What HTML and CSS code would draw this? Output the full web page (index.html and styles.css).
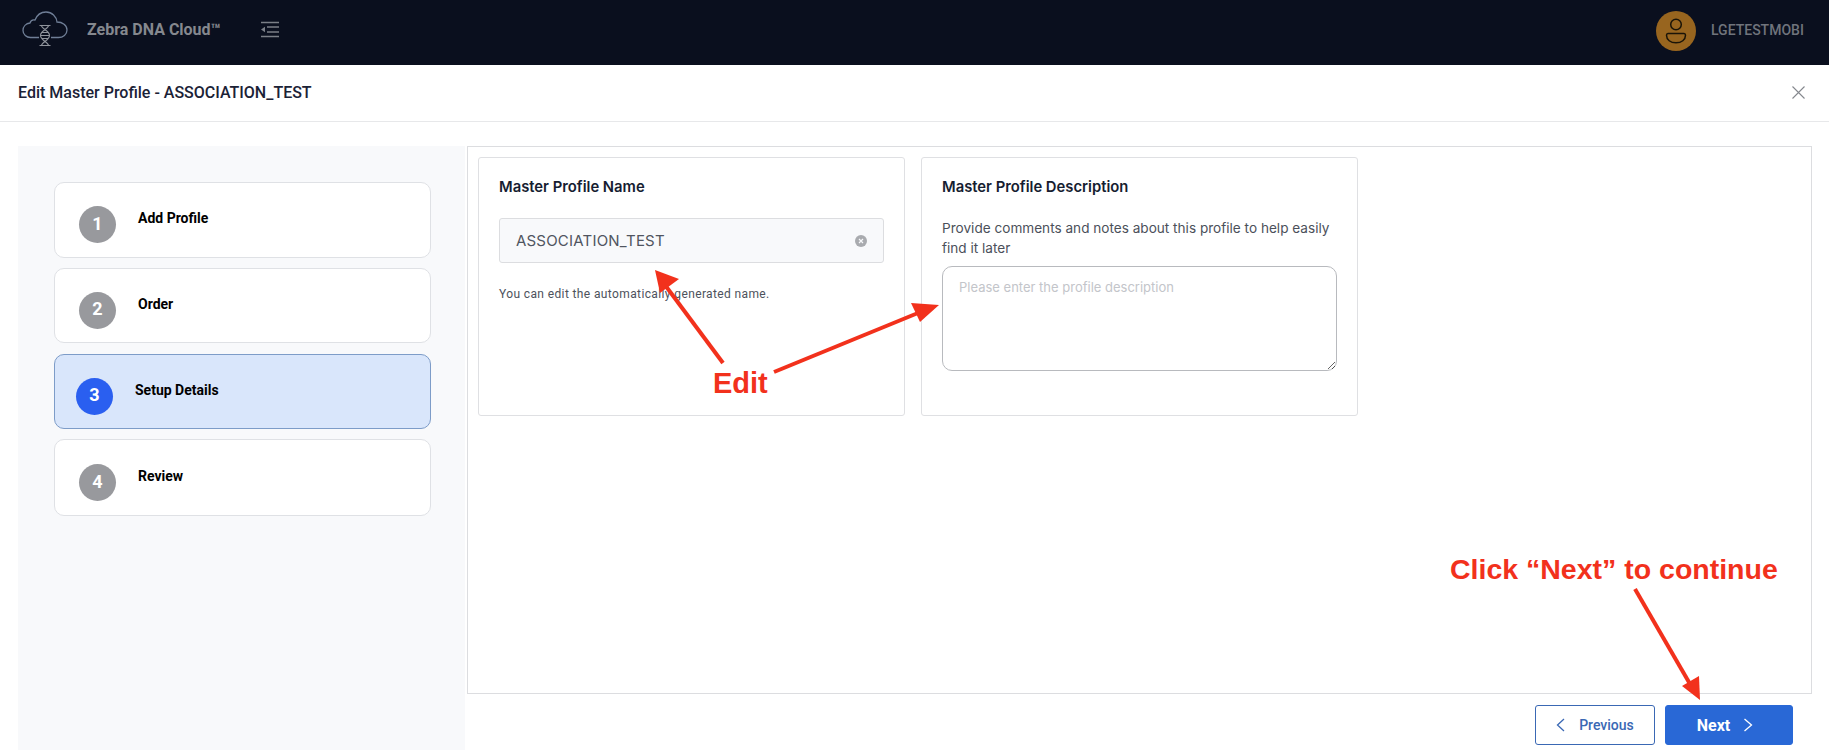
FILE: index.html
```html
<!DOCTYPE html>
<html lang="en">
<head>
<meta charset="utf-8">
<title>Edit Master Profile</title>
<link rel="stylesheet" href="styles.css">
</head>
<body>
<div class="page">
  <header class="topbar">
    <div class="brand">
      <svg class="logo" width="46" height="36" viewBox="0 0 46 36" fill="none">
        <path d="M17 26.500H8.500C4.500 26.500 1 23.500 1 19.500C1 15.500 4 12.500 8 12C8.500 10 10.500 8.500 13 9C15 4 19.500 1 24 1C30 1 34.500 5.500 35 11C40.500 11 45 14.500 45 19C45 23.500 41 26.500 36.500 26.500H29" stroke="#6f7e96" stroke-width="1.300"/>
        <path d="M17.500 14.500H28.500M17.500 34.500H28.500M19.500 14.500C19.500 18 27.500 19.500 27.500 24.500C27.500 29.500 19.500 31 19.500 34.500M26.500 14.500C26.500 18 18.500 19.500 18.500 24.500C18.500 29.500 26.500 31 26.500 34.500M20 21.500H26M19 24.500H27M20 27.500H26" stroke="#8f939b" stroke-width="1.100"/>
      </svg>
      <span class="brand-name">Zebra DNA Cloud™</span>
      <svg class="menu-icon" width="19" height="17" viewBox="0 0 19 17" fill="none" stroke="#7b7f87" stroke-width="1.400">
        <path d="M0 1.500H18M6 6H18M6 11H18M0 15.500H18"/>
        <path d="M0 8.500L4 5.800V11.200Z" fill="#7b7f87" stroke="none"/>
      </svg>
    </div>
    <div class="user">
      <span class="avatar">
        <svg width="22" height="26" viewBox="0 0 22 26" fill="none" stroke="#1a1408" stroke-width="1.500">
          <circle cx="11" cy="6.500" r="5.300"/>
          <path d="M3 15.500H19C20 15.500 20.500 16.300 20.500 17.300C20.500 21.800 16.500 24.800 11 24.800C5.500 24.800 1.500 21.800 1.500 17.300C1.500 16.300 2 15.500 3 15.500Z"/>
        </svg>
      </span>
      <span class="user-name">LGETESTMOBI</span>
    </div>
  </header>

  <div class="titlebar">
    <h1 class="page-title">Edit Master Profile - ASSOCIATION_TEST</h1>
    <svg class="close-icon" width="13" height="13" viewBox="0 0 13 13" stroke="#85888e" stroke-width="1.100" fill="none">
      <path d="M0.500 0.500L12.500 12.500M12.500 0.500L0.500 12.500"/>
    </svg>
  </div>

  <div class="workspace">
    <aside class="sidebar">
      <div class="step">
        <span class="step-num">1</span><span class="step-label">Add Profile</span>
      </div>
      <div class="step">
        <span class="step-num">2</span><span class="step-label">Order</span>
      </div>
      <div class="step step-active">
        <span class="step-num">3</span><span class="step-label">Setup Details</span>
      </div>
      <div class="step">
        <span class="step-num">4</span><span class="step-label">Review</span>
      </div>
    </aside>

    <main class="content">
      <section class="panel">
        <div class="card card-name">
          <h2 class="card-title">Master Profile Name</h2>
          <div class="field">
            <span class="field-value">ASSOCIATION_TEST</span>
            <svg width="12" height="12" viewBox="0 0 12 12">
              <circle cx="6" cy="6" r="6" fill="#a9abaf"/>
              <path d="M4 4L8 8M8 4L4 8" stroke="#f8f9fb" stroke-width="1.200"/>
            </svg>
          </div>
          <p class="hint">You can edit the automatically generated name.</p>
        </div>
        <div class="card card-desc">
          <h2 class="card-title">Master Profile Description</h2>
          <p class="desc">Provide comments and notes about this profile to help easily find it later</p>
          <textarea class="desc-input" placeholder="Please enter the profile description"></textarea>
        </div>
      </section>
      <footer class="actions">
        <button class="btn btn-outline" type="button">
          <svg width="9" height="14" viewBox="0 0 9 14" fill="none" stroke="#3a68b4" stroke-width="1.300"><path d="M8 1L1.500 7L8 13"/></svg>
          Previous
        </button>
        <button class="btn btn-primary" type="button">
          Next
          <svg width="10" height="14" viewBox="0 0 10 14" fill="none" stroke="#ffffff" stroke-width="1.300"><path d="M1.500 1L8.500 7L1.500 13"/></svg>
        </button>
      </footer>
    </main>
  </div>

  <svg class="arrows" width="1829" height="750" viewBox="0 0 1829 750">
    <g stroke="#f2311c" stroke-width="4" fill="#f2311c">
      <path d="M723 363L665 285" fill="none"/>
      <path d="M655 270L679 279L660 293Z" stroke="none"/>
      <path d="M774 372L918 313" fill="none"/>
      <path d="M939 305L920 322L911 303Z" stroke="none"/>
      <path d="M1635 589L1690 684" fill="none"/>
      <path d="M1700 700L1682 686L1699 676Z" stroke="none"/>
    </g>
  </svg>
  <span class="note note-edit">Edit</span>
  <span class="note note-next">Click “Next” to continue</span>
</div>
</body>
</html>
```
FILE: styles.css
```css
* { box-sizing: border-box; }
html, body { margin: 0; padding: 0; height: 100%; overflow: hidden; background: #fff; }
body { font-family: Roboto, "Liberation Sans", sans-serif; }

.page { position: relative; width: 1829px; height: 750px; display: flex; flex-direction: column; overflow: hidden; }

.topbar { height: 65px; flex: none; background: #0a0f1e; display: flex; align-items: center; justify-content: space-between; padding: 0 25px 5px 22px; }
.brand { display: flex; align-items: center; margin-bottom: 2px; }
.brand-name { margin-left: 19px; width: 174px; font-size: 16px; font-weight: 700; color: #85888e; }
.user { display: flex; align-items: center; }
.avatar { width: 40px; height: 40px; border-radius: 50%; background: #98651f; display: flex; align-items: center; justify-content: center; margin: 2px 15px 0 0; }
.user-name { font-size: 14px; font-weight: 500; color: #70747c; width: 93px; white-space: nowrap; }

.titlebar { height: 57px; flex: none; border-bottom: 1px solid #e7e8ea; display: flex; align-items: center; justify-content: space-between; padding: 0 24px 1px 18px; }
.page-title { margin: 0; font-size: 16px; font-weight: 500; color: #1b2236; }

.workspace { flex: 1; display: flex; padding: 24px 17px 0 18px; min-height: 0; }

.sidebar { width: 447px; flex: none; background: #f8f9fb; padding: 36px 34px 0 36px; display: flex; flex-direction: column; gap: 10.300px; }
.step { height: 75.500px; flex: none; border: 1px solid #dfe1e5; border-radius: 10px; background: #fff; display: flex; align-items: flex-start; padding: 23px 0 0 24px; }
.step:last-child { height: 76.500px; padding-top: 24px; }
.step-num { width: 37px; height: 37px; flex: none; border-radius: 50%; background: #98999d; color: #fff; font-size: 18px; font-weight: 700; display: flex; align-items: center; justify-content: center; padding-bottom: 3px; }
.step-label { margin: 4px 0 0 22px; font-size: 14px; line-height: 17px; font-weight: 700; color: #000; }
.step-active { background: #d9e6fb; border-color: #7d9cc8; padding-left: 21px; }
.step-active .step-num { background: #2a5ff0; }

.content { flex: 1; display: flex; flex-direction: column; min-width: 0; margin-left: 2px; }
.panel { height: 548px; flex: none; border: 1px solid #dcdde0; display: flex; align-items: flex-start; padding: 10px; gap: 16px; }

.card { height: 259px; border: 1px solid #dfe0e3; border-radius: 3px; background: #fff; padding: 20px; flex: none; }
.card-name { width: 427px; }
.card-desc { width: 437px; }
.card-title { margin: 0; font-family: Inter, sans-serif; font-size: 14.800px; line-height: 18px; font-weight: 600; color: #161d31; }

.field { margin-top: 22px; width: 385px; height: 45px; background: #f8f9fb; border: 1px solid #dcdde0; border-radius: 3px; display: flex; align-items: center; justify-content: space-between; padding: 0 16px 0 16px; }
.field-value { font-family: Inter, sans-serif; font-size: 15px; letter-spacing: 0.200px; color: #50555f; }
.hint { margin: 24px 0 0; font-size: 12px; line-height: 14px; letter-spacing: 0.380px; color: #4d525c; }

.desc { margin: 22px 0 0; font-family: Inter, sans-serif; font-size: 13.600px; line-height: 20px; color: #4b505a; }
.desc-input { display: block; margin-top: 8px; width: 395px; height: 105px; border: 1px solid #b8babe; border-radius: 10px; padding: 12px 16px; font-family: Inter, sans-serif; font-size: 13px; line-height: 17px; background: #fff; outline: none; }
.desc-input::placeholder { color: #c3c5ca; opacity: 1; }

.actions { flex: 1; display: flex; justify-content: flex-end; gap: 10px; padding: 11px 19px 0 0; align-items: flex-start; }
.btn { height: 40px; border-radius: 3px; font-family: Roboto, sans-serif; display: flex; align-items: center; justify-content: center; cursor: pointer; }
.btn-outline { width: 120px; background: #fff; border: 1px solid #3a68b4; color: #3a68b4; font-size: 14px; font-weight: 500; gap: 14px; }
.btn-primary { width: 128px; background: #2968d6; border: 1px solid #2968d6; color: #fff; font-size: 16px; font-weight: 700; gap: 13px; padding-right: 14px; }

.arrows { position: absolute; left: 0; top: 0; pointer-events: none; }
.note { position: absolute; font-family: "Liberation Sans", Arial, sans-serif; font-weight: 700; color: #f2311c; white-space: nowrap; }
.note-edit { left: 713px; top: 367px; font-size: 29px; line-height: 32px; }
.note-next { left: 1450px; top: 553px; font-size: 28.500px; line-height: 33px; }
```
